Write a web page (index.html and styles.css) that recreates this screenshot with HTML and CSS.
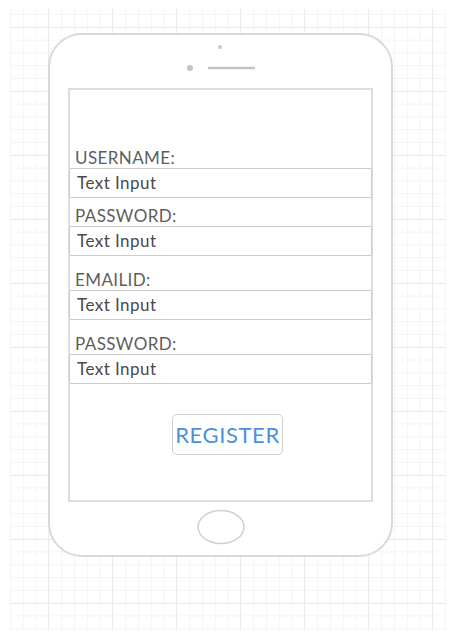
FILE: index.html
```html
<!DOCTYPE html>
<html>
<head>
<meta charset="utf-8">
<link rel="stylesheet" href="styles.css">
</head>
<body>
<div class="canvas">
  <div class="phone">
    <div class="phone-top">
      <svg width="341" height="53" viewBox="0 0 341 53">
        <circle cx="170" cy="12" r="2" fill="#c8c8c8"/>
        <circle cx="140" cy="33" r="3" fill="#c4c4c4"/>
        <line x1="159" y1="33" x2="204" y2="33" stroke="#c4c4c4" stroke-width="2.5" stroke-linecap="round"/>
      </svg>
    </div>
    <div class="screen">
      <div class="field">
        <div class="label">USERNAME:</div>
        <div class="input">Text Input</div>
      </div>
      <div class="field field--tight">
        <div class="label">PASSWORD:</div>
        <div class="input">Text Input</div>
      </div>
      <div class="field">
        <div class="label">EMAILID:</div>
        <div class="input">Text Input</div>
      </div>
      <div class="field">
        <div class="label">PASSWORD:</div>
        <div class="input">Text Input</div>
      </div>
      <div class="actions">
        <div class="btn">REGISTER</div>
      </div>
    </div>
    <div class="phone-bottom">
      <svg width="341" height="53" viewBox="0 0 341 53">
        <ellipse cx="171" cy="25" rx="23" ry="16.5" fill="none" stroke="#d0d0d0" stroke-width="1.5"/>
      </svg>
    </div>
  </div>
</div>
</body>
</html>
```

FILE: styles.css
```css
html, body {
  margin: 0;
  padding: 0;
  background: #ffffff;
}

body {
  font-family: Lato, "Open Sans", sans-serif;
  width: 451px;
  height: 638px;
  overflow: hidden;
}

.canvas {
  margin: 9px 5px 0 10px;
  width: 436px;
  height: 621px;
  box-sizing: border-box;
  padding: 24px 0 0 38px;
  background-color: #ffffff;
  background-image:
    linear-gradient(to right, #ebebeb 1px, transparent 1px),
    linear-gradient(to bottom, #ebebeb 1px, transparent 1px),
    linear-gradient(to right, #f4f4f4 1px, transparent 1px),
    linear-gradient(to bottom, #f4f4f4 1px, transparent 1px);
  background-size: 64px 64px, 64px 64px, 12.8px 12.8px, 12.8px 12.8px;
  background-position: 38px 18px, 38px 18px, 0 5px, 0 5px;
}

.phone {
  width: 345px;
  height: 524px;
  box-sizing: border-box;
  border: 2px solid #d9d9d9;
  border-radius: 34px;
  background: #ffffff;
  display: flex;
  flex-direction: column;
}

.phone-top,
.phone-bottom {
  height: 53px;
  flex: none;
}

.phone-top svg,
.phone-bottom svg {
  display: block;
}

.screen {
  margin: 0 18px;
  height: 414px;
  box-sizing: border-box;
  border: 2px solid #dcdcdc;
  padding-top: 58px;
  display: flex;
  flex-direction: column;
  gap: 14px;
}

.field {
  display: flex;
  flex-direction: column;
}

.field--tight {
  margin-top: -6px;
}

.label {
  height: 20px;
  line-height: 20px;
  font-size: 17px;
  color: #5e5e5e;
  padding-left: 5px;
  letter-spacing: 0.4px;
}

.input {
  height: 30px;
  box-sizing: border-box;
  border: 1.5px solid #cccccc;
  border-radius: 2px;
  margin: 0 -1px;
  padding-left: 7px;
  line-height: 27px;
  font-size: 17px;
  letter-spacing: 0.45px;
  color: #4a4a4a;
}

.actions {
  margin-top: 16px;
  display: flex;
  justify-content: center;
  padding-left: 14px;
}

.btn {
  width: 111px;
  height: 41px;
  box-sizing: border-box;
  border: 1.5px solid #cfcfcf;
  border-radius: 5px;
  display: flex;
  align-items: center;
  justify-content: center;
  font-size: 22px;
  letter-spacing: 0.6px;
  color: #4a90e2;
  background: #ffffff;
}
```
